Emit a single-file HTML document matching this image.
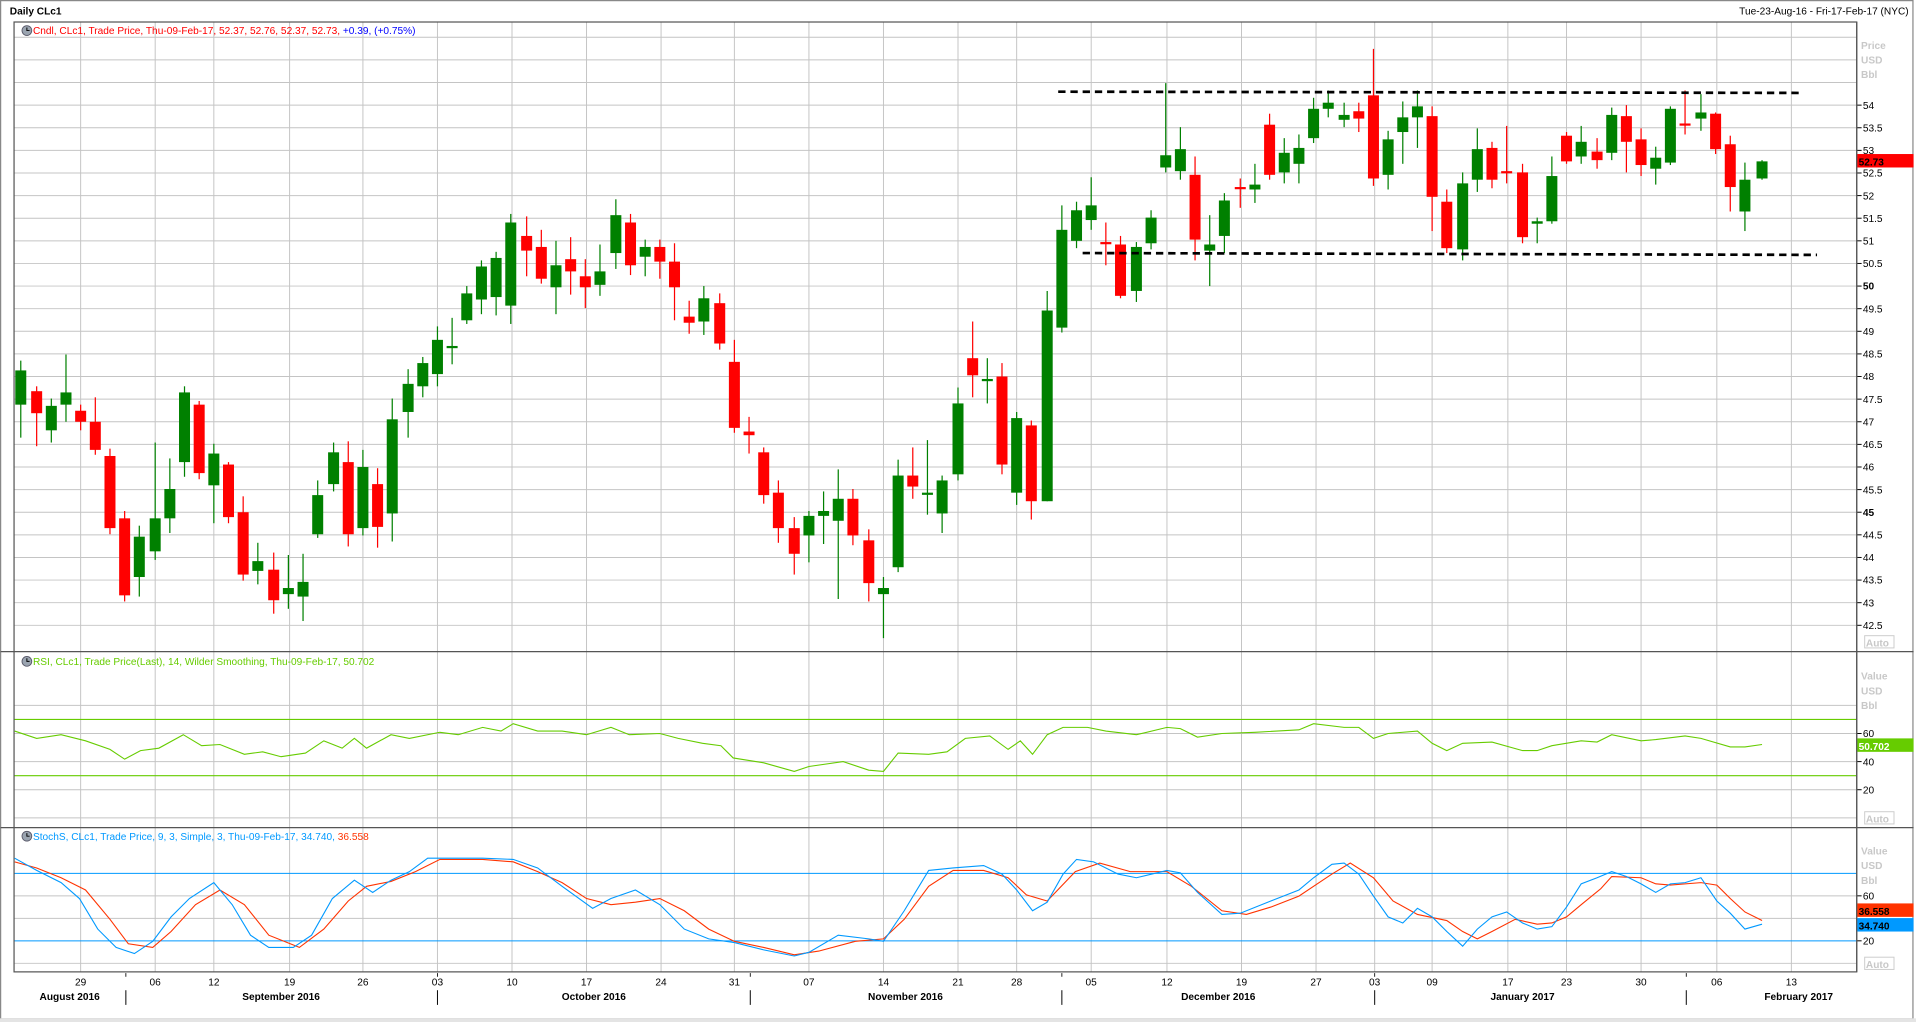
<!DOCTYPE html>
<html><head><meta charset="utf-8"><style>
html,body{margin:0;padding:0;background:#fff;overflow:hidden}
svg{display:block}
text{font-family:"Liberation Sans",sans-serif;font-size:8.3px}
</style></head><body>
<svg id="s" width="1916" height="1022" viewBox="0 0 1568 836" preserveAspectRatio="none" xmlns="http://www.w3.org/2000/svg">
<rect x="0" y="0" width="1568" height="836" fill="#fff"/>
<rect x="0.5" y="0.5" width="1565" height="833" fill="none" stroke="#888" stroke-width="1"/>
<rect x="0" y="833" width="1568" height="3" fill="#e4e4e4"/>
<g id="grid"></g>
<g id="c"></g>
</svg>
<script>
var S=document.getElementById('s'),NS='http://www.w3.org/2000/svg';
function el(t,a,p,txt){var e=document.createElementNS(NS,t);for(var k in a)e.setAttribute(k,a[k]);if(txt!=null)e.textContent=txt;(p||S).appendChild(e);return e;}
var G=document.getElementById('grid'),C=document.getElementById('c');
var L=11.5,R=1519.5,T=18,PB=533,RB=677,SB=795;
var weeks=[66,127,175,237,297,358,419,480,541,601,662,723,784,832,893,955,1016,1077,1125,1172,1234,1282,1343,1405,1466];
weeks.forEach(function(x){el('line',{x1:x,y1:T,x2:x,y2:SB,stroke:'#c4c4c4','stroke-width':0.8},G);});
// price grid
for(var p=42.5;p<=56.5;p+=0.5){var y=86+(54-p)*37;if(y>T+2&&y<PB)el('line',{x1:L,y1:y,x2:R,y2:y,stroke:'#c4c4c4','stroke-width':0.8},G);
 if(p<=54&&y>T+2){el('line',{x1:R,y1:y,x2:R+4,y2:y,stroke:'#000','stroke-width':0.8},G);
 var bold=(p==50||p==45);el('text',{x:R+5,y:y+3,fill:'#000','font-weight':bold?'bold':'normal'},G,String(p));}}
// rsi grid
[20,40,60,80].forEach(function(v){var y=669-v*1.15;el('line',{x1:L,y1:y,x2:R,y2:y,stroke:'#c4c4c4','stroke-width':0.8},G);
 if(v<80){el('line',{x1:R,y1:y,x2:R+4,y2:y,stroke:'#000','stroke-width':0.8},G);el('text',{x:R+5,y:y+3},G,String(v));}});
el('line',{x1:L,y1:669,x2:R,y2:669,stroke:'#c4c4c4','stroke-width':0.8},G);
[70,30].forEach(function(v){var y=669-v*1.15;el('line',{x1:L,y1:y,x2:R,y2:y,stroke:'#66cc00','stroke-width':0.9},G);});
// stoch grid
[0,20,40,60,80].forEach(function(v){var y=788-v*0.92;el('line',{x1:L,y1:y,x2:R,y2:y,stroke:v==80||v==20?'#0099ff':'#c4c4c4','stroke-width':0.8},G);
 if(v==20||v==60){el('line',{x1:R,y1:y,x2:R+4,y2:y,stroke:'#000','stroke-width':0.8},G);el('text',{x:R+5,y:y+3},G,String(v));}});
// frames
el('rect',{x:L,y:T,width:R-L,height:SB-T,fill:'none',stroke:'#555','stroke-width':1},G);
[PB,RB].forEach(function(y){el('line',{x1:L-11,y1:y,x2:1566,y2:y,stroke:'#555','stroke-width':1},G);});
el('line',{x1:R,y1:T,x2:R,y2:SB,stroke:'#555','stroke-width':1},G);
// right labels
function gl(x,y,t){el('text',{x:x,y:y,fill:'#c8c8c8','font-weight':'bold'},G,t);}
gl(1523,40,'Price');gl(1523,52,'USD');gl(1523,64,'Bbl');
gl(1523,556,'Value');gl(1523,568,'USD');gl(1523,580,'Bbl');
gl(1523,699,'Value');gl(1523,711,'USD');gl(1523,723,'Bbl');
[[529],[673],[792]].forEach(function(a){el('rect',{x:1526,y:a[0]-9,width:24,height:10,fill:'#fff',stroke:'#ccc','stroke-width':0.8},G);gl(1527,a[0],'Auto');});
function box(y,col,t,tc){el('rect',{x:1520,y:y-6,width:46,height:11,fill:col},G);el('text',{x:1521,y:y+3.5,fill:tc,'font-weight':'bold','font-size':'9.5px'},G,t);}
box(132,'#ff0000','52.73','#000');box(610,'#66cc00','50.702','#fff');box(745,'#ff3300','36.558','#000');box(757,'#0099ff','34.740','#000');
// header texts
el('text',{x:8,y:12,'font-weight':'bold','font-size':'8.6px'},G,'Daily CLc1');
el('text',{x:1562,y:12,'text-anchor':'end'},G,'Tue-23-Aug-16 - Fri-17-Feb-17 (NYC)');
function clock(x,y){el('circle',{cx:x,cy:y,r:4,fill:'#9aa4b0',stroke:'#556',"stroke-width":0.7},G);el('path',{d:'M'+x+' '+(y-2.5)+'V'+y+'H'+(x+2.2),stroke:'#000',fill:'none','stroke-width':0.8},G);}
clock(22,25);clock(22,541);clock(22,684);
var t=el('text',{x:27,y:28},G);
el('tspan',{fill:'#ff0000'},t,'Cndl, CLc1, Trade Price, Thu-09-Feb-17, 52.37, 52.76, 52.37, 52.73, ');
el('tspan',{fill:'#0000ff'},t,'+0.39, (+0.75%)');
el('text',{x:27,y:544,fill:'#66cc00'},G,'RSI, CLc1, Trade Price(Last),  14, Wilder Smoothing, Thu-09-Feb-17, 50.702');
var t2=el('text',{x:27,y:687},G);el('tspan',{fill:'#0099ff'},t2,'StochS, CLc1, Trade Price, 9, 3, Simple, 3, Thu-09-Feb-17, 34.740, ');el('tspan',{fill:'#ff3300'},t2,'36.558');
// x labels
var dl=['29','06','12','19','26','03','10','17','24','31','07','14','21','28','05','12','19','27','03','09','17','23','30','06','13'];
weeks.forEach(function(x,i){el('text',{x:x,y:806,'text-anchor':'middle'},G,dl[i]);});
[[57,'August 2016'],[230,'September 2016'],[486,'October 2016'],[741,'November 2016'],[997,'December 2016'],[1246,'January 2017'],[1472,'February 2017']].forEach(function(a){el('text',{x:a[0],y:818,'text-anchor':'middle','font-weight':'bold','font-size':'8.8px'},G,a[1]);});
[103,358,614,869,1125,1380].forEach(function(x){el('line',{x1:x,y1:796,x2:x,y2:799,stroke:'#000','stroke-width':0.7},G);el('line',{x1:x,y1:810,x2:x,y2:822,stroke:'#000','stroke-width':0.8},G);});
// candles
var D=[[17,'G',303,331,295,358],[30,'R',320,338,316,365],[42,'G',332,352,326,362],[54,'G',321,331,290,345],[66,'R',336,345,331,352],[78,'R',345,368,325,372],[90,'R',373,432,367,437],[102,'R',424,487,418,492],[114,'G',439,472,430,488],[127,'G',424,451,362,458],[139,'G',400,424,375,436],[151,'G',321,378,316,390],[163,'R',331,387,328,392],[175,'G',371,397,363,428],[187,'R',380,423,378,428],[199,'R',419,470,406,475],[211,'G',459,467,444,478],[224,'R',466,491,452,502],[236,'G',481,486,454,498],[248,'G',476,488,453,508],[260,'G',405,437,393,440],[273,'G',370,396,362,402],[285,'R',378,437,361,447],[297,'G',382,432,368,438],[309,'R',396,431,383,448],[321,'G',343,420,326,443],[334,'G',314,337,302,358],[346,'G',297,316,292,325],[358,'G',278,306,267,316],[370,'G',283,284,260,298],[382,'G',240,262,234,265],[394,'G',218,245,213,257],[406,'G',211,243,206,258],[418,'G',182,250,175,265],[431,'R',193,205,177,226],[443,'R',202,228,188,232],[455,'G',217,235,197,257],[467,'R',212,222,194,241],[479,'R',226,235,212,252],[491,'G',222,233,200,242],[504,'G',176,207,163,220],[516,'R',182,217,175,225],[528,'G',202,210,196,226],[540,'R',202,214,196,228],[552,'R',214,235,199,262],[564,'R',259,264,246,273],[576,'G',244,263,234,274],[589,'R',248,281,240,286],[601,'R',296,350,278,354],[613,'R',353,356,341,371],[625,'R',370,405,366,412],[637,'R',403,432,393,444],[650,'R',432,453,423,470],[662,'G',422,438,418,460],[674,'G',418,422,402,445],[686,'G',408,426,384,490],[698,'R',408,438,400,446],[711,'R',442,477,433,492],[723,'G',481,486,472,522],[735,'G',389,464,376,468],[747,'R',389,398,366,408],[759,'G',403,404,360,421],[771,'G',393,420,389,436],[784,'G',330,388,317,393],[796,'R',293,307,263,325],[808,'G',310,311,293,330],[820,'R',308,380,297,388],[832,'G',342,403,337,413],[844,'R',348,410,344,425],[857,'G',254,410,238,410],[869,'G',188,268,168,272],[881,'G',172,197,165,203],[893,'G',168,180,145,188],[905,'R',198,199,182,217],[917,'R',200,242,193,244],[930,'G',202,238,198,247],[942,'G',178,199,172,204],[954,'G',127,137,68,141],[966,'G',122,140,104,147],[978,'R',143,196,128,213],[990,'G',200,205,176,234],[1002,'G',164,193,158,207],[1015,'R',153,154,146,170],[1027,'G',151,155,134,166],[1039,'R',102,143,93,147],[1051,'G',125,141,113,150],[1063,'G',121,134,110,150],[1075,'G',89,113,80,117],[1087,'G',84,89,74,96],[1100,'G',94,98,84,104],[1112,'R',91,97,84,108],[1124,'R',78,146,40,152],[1136,'G',114,143,107,155],[1148,'G',96,108,83,134],[1160,'G',87,96,74,121],[1172,'R',95,161,87,189],[1184,'R',165,203,155,207],[1197,'G',150,204,141,213],[1209,'G',122,147,105,157],[1221,'R',121,147,116,154],[1233,'R',140,141,103,150],[1246,'R',141,194,134,199],[1258,'G',181,183,178,199],[1270,'G',144,181,128,183],[1282,'R',111,132,108,134],[1294,'G',116,128,103,134],[1307,'R',124,131,113,138],[1319,'G',94,125,88,131],[1331,'R',95,116,86,141],[1343,'R',114,135,105,144],[1355,'G',129,138,120,151],[1367,'G',89,133,87,135],[1379,'R',101,102,74,110],[1392,'G',92,97,77,107],[1404,'R',93,122,92,126],[1416,'R',118,153,111,173],[1428,'G',147,173,133,189],[1442,'G',132,146,131,147]];
D.forEach(function(d){var col=d[1]=='G'?'#008000':'#ff0000';var x=d[0];
 el('line',{x1:x,y1:d[4],x2:x,y2:d[5],stroke:col,'stroke-width':1},C);
 var h=Math.max(d[3]-d[2],1.8);el('rect',{x:x-4.5,y:d[2],width:9,height:h,fill:col},C);});
// dashed lines
el('line',{x1:866,y1:75,x2:1472,y2:76,stroke:'#000','stroke-width':2.2,'stroke-dasharray':'6,4'},C);
el('line',{x1:886,y1:207,x2:1487,y2:208.5,stroke:'#000','stroke-width':2.2,'stroke-dasharray':'6,4'},C);
function pl(pts,col){el('polyline',{points:pts.map(function(p){return p.join(',')}).join(' '),fill:'none',stroke:col,'stroke-width':0.9},C);}
pl([[12,598],[30,604],[50,601],[70,606],[90,613],[102,621],[115,614],[130,612],[150,601],[165,610],[180,609],[200,617],[215,615],[230,619],[250,616],[265,606],[280,612],[290,604],[300,612],[320,601],[335,604],[360,599],[375,601],[395,595],[410,598],[420,592],[440,598],[460,598],[480,601],[500,595],[515,601],[540,600],[555,604],[575,608],[590,610],[600,620],[625,624],[650,631],[662,627],[690,623],[711,630],[723,631],[735,616],[760,617],[775,615],[790,604],[810,602],[825,613],[835,606],[845,617],[857,601],[870,595],[890,595],[905,598],[930,601],[955,595],[966,596],[980,603],[1000,600],[1027,599],[1063,597],[1075,592],[1100,595],[1112,595],[1124,604],[1136,600],[1160,598],[1172,608],[1184,614],[1197,608],[1221,607],[1246,614],[1258,614],[1270,610],[1294,606],[1307,607],[1319,601],[1343,606],[1355,605],[1379,602],[1392,604],[1416,611],[1428,611],[1442,609]],'#66cc00');
pl([[12,705],[30,710],[50,718],[70,728],[90,752],[105,772],[125,775],[140,762],[160,740],[180,728],[200,740],[220,765],[245,775],[265,760],[285,737],[300,725],[320,721],[340,713],[360,703],[395,703],[420,705],[440,713],[460,722],[480,735],[500,740],[520,738],[540,735],[560,745],[580,760],[601,770],[625,775],[650,781],[670,778],[700,770],[723,768],[740,752],[760,725],[780,712],[805,712],[825,718],[840,732],[857,737],[880,713],[900,706],[925,713],[955,713],[975,725],[1000,745],[1020,748],[1040,742],[1063,733],[1090,715],[1105,706],[1124,718],[1140,737],[1160,748],[1184,753],[1197,762],[1209,768],[1221,762],[1240,752],[1258,756],[1270,755],[1282,750],[1294,740],[1310,727],[1319,717],[1343,718],[1355,723],[1367,724],[1392,722],[1405,724],[1416,735],[1428,746],[1442,753]],'#ff3300');
pl([[12,702],[30,712],[50,722],[65,735],[80,760],[95,775],[110,780],[125,770],[140,750],[155,735],[175,722],[190,740],[205,765],[220,775],[240,775],[255,765],[272,735],[290,720],[305,730],[320,720],[335,713],[350,702],[370,702],[395,702],[420,703],[440,710],[460,725],[485,743],[500,735],[520,728],[540,740],[560,760],[580,768],[601,771],[625,777],[650,782],[662,779],[686,765],[711,768],[723,770],[740,745],[760,712],[780,710],[805,708],[820,715],[832,728],[845,745],[857,738],[870,715],[881,703],[895,705],[915,715],[930,718],[955,712],[966,714],[980,730],[1000,748],[1015,747],[1040,737],[1063,728],[1075,718],[1090,707],[1100,706],[1112,715],[1124,733],[1136,750],[1148,755],[1160,743],[1172,750],[1184,762],[1197,774],[1209,760],[1221,750],[1233,746],[1246,755],[1258,760],[1270,758],[1282,742],[1294,723],[1307,718],[1319,713],[1331,717],[1343,723],[1355,730],[1367,723],[1379,722],[1392,718],[1405,737],[1416,747],[1428,760],[1442,756]],'#0099ff');
</script>
</body></html>
